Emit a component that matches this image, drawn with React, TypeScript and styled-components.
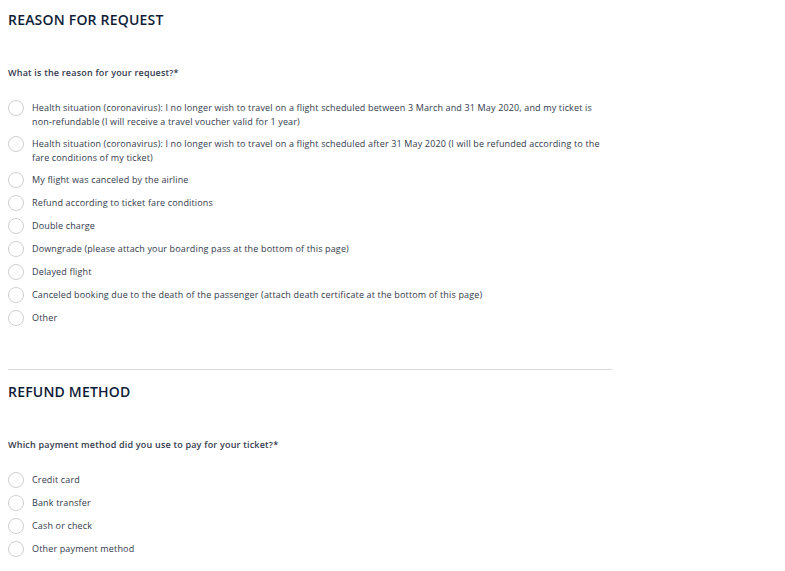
import styled, { createGlobalStyle } from 'styled-components';

const GlobalStyle = createGlobalStyle`
  body {
    margin: 0;
    background: #ffffff;
    font-family: 'Open Sans', 'Noto Sans', sans-serif;
  }
`;

const Page = styled.div`
  width: 604px;
  padding: 10px 0 0 8px;
`;

const Section = styled.section`
  display: flex;
  flex-direction: column;
`;

const SectionTitle = styled.h2`
  margin: 0;
  font-size: 14px;
  line-height: 20px;
  font-weight: 600;
  color: #0f1c38;
  letter-spacing: 0.2px;
`;

const Question = styled.p`
  margin: 36px 0 20px;
  font-size: 9px;
  line-height: 14px;
  font-weight: 600;
  letter-spacing: 0.2px;
  color: #343a4e;
`;

const OptionList = styled.ul`
  display: flex;
  flex-direction: column;
  gap: 7px;
  margin: 0;
  padding: 0;
  list-style: none;
`;

const Option = styled.li`
  display: flex;
  align-items: flex-start;
  gap: 8px;
`;

const RadioCircle = styled.span`
  flex: none;
  width: 16px;
  height: 16px;
  box-sizing: border-box;
  border: 1px solid #cfcfcf;
  border-radius: 50%;
  background: #ffffff;
`;

const OptionText = styled.span`
  padding: 1px 0;
  font-size: 9px;
  line-height: 13.5px;
  letter-spacing: 0.15px;
  color: #333a4c;
`;

const Divider = styled.hr`
  margin: 43px 0 12px;
  border: none;
  border-top: 1px solid #d9d9d9;
  width: 100%;
`;

const reasons = [
  'Health situation (coronavirus): I no longer wish to travel on a flight scheduled between 3 March and 31 May 2020, and my ticket is non-refundable (I will receive a travel voucher valid for 1 year)',
  'Health situation (coronavirus): I no longer wish to travel on a flight scheduled after 31 May 2020 (I will be refunded according to the fare conditions of my ticket)',
  'My flight was canceled by the airline',
  'Refund according to ticket fare conditions',
  'Double charge',
  'Downgrade (please attach your boarding pass at the bottom of this page)',
  'Delayed flight',
  'Canceled booking due to the death of the passenger (attach death certificate at the bottom of this page)',
  'Other',
];

const paymentMethods = ['Credit card', 'Bank transfer', 'Cash or check', 'Other payment method'];

function RadioGroup({ options }: { options: string[] }) {
  return (
    <OptionList>
      {options.map((label) => (
        <Option key={label}>
          <RadioCircle />
          <OptionText>{label}</OptionText>
        </Option>
      ))}
    </OptionList>
  );
}

export default function App() {
  return (
    <>
      <GlobalStyle />
      <Page>
        <Section>
          <SectionTitle>REASON FOR REQUEST</SectionTitle>
          <Question>What is the reason for your request?*</Question>
          <RadioGroup options={reasons} />
        </Section>

        <Divider />

        <Section>
          <SectionTitle>REFUND METHOD</SectionTitle>
          <Question>Which payment method did you use to pay for your ticket?*</Question>
          <RadioGroup options={paymentMethods} />
        </Section>
      </Page>
    </>
  );
}
